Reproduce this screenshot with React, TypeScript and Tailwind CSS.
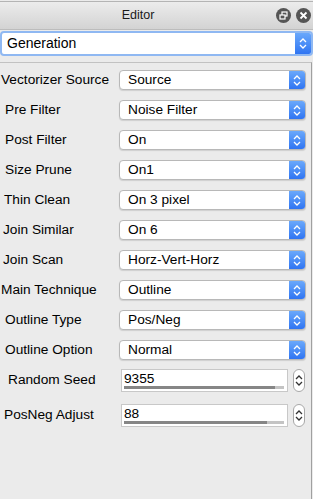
import React from 'react';

const font = { fontFamily: '"Liberation Sans", Arial, sans-serif' };

const rows = [
  { label: 'Vectorizer Source', value: 'Source', pad: 'pl-[1px]' },
  { label: 'Pre Filter', value: 'Noise Filter', pad: 'pl-[5px]' },
  { label: 'Post Filter', value: 'On', pad: 'pl-[5px]' },
  { label: 'Size Prune', value: 'On1', pad: 'pl-[5px]' },
  { label: 'Thin Clean', value: 'On 3 pixel', pad: 'pl-[4px]' },
  { label: 'Join Similar', value: 'On 6', pad: 'pl-[3px]' },
  { label: 'Join Scan', value: 'Horz-Vert-Horz', pad: 'pl-[3px]' },
  { label: 'Main Technique', value: 'Outline', pad: 'pl-[1px]' },
  { label: 'Outline Type', value: 'Pos/Neg', pad: 'pl-[5px]' },
  { label: 'Outline Option', value: 'Normal', pad: 'pl-[5px]' },
];

const Chevrons = ({ color = 'white' }: { color?: string }) => (
  <svg width="8" height="13" viewBox="0 0 8 13">
    <path d="M1 5 L4 2 L7 5" fill="none" stroke={color} strokeWidth="1.3" />
    <path d="M1 8 L4 11 L7 8" fill="none" stroke={color} strokeWidth="1.3" />
  </svg>
);

const Combo = ({ value }: { value: string }) => (
  <div className="flex h-[20px] flex-1 items-stretch rounded-[4px] border border-[#b8b8b8] bg-white shadow-[0_1px_1px_rgba(0,0,0,0.12)]">
    <div className="flex flex-1 items-center pl-[8px] text-[13.7px] text-black">{value}</div>
    <div className="flex w-[16px] items-center justify-center rounded-r-[3px] bg-gradient-to-b from-[#6aa8fb] to-[#2f74f2]">
      <Chevrons />
    </div>
  </div>
);

const Spin = ({ value, fill }: { value: string; fill: number }) => (
  <div className="flex items-center">
    <div className="flex h-[23px] w-[167px] flex-col border border-[#c8c8c8] bg-white pl-[2px] pr-[3px]">
      <div className="flex-1 pt-[2px] text-[13.7px] leading-[14px] text-black">{value}</div>
      <div className="mb-[2px] flex h-[4px] bg-[#c4c4c4]">
        <div className="h-full bg-[#868686]" style={{ width: `${fill}px` }} />
      </div>
    </div>
    <div className="ml-[5px] flex h-[23px] w-[12px] items-center justify-center rounded-[6px] border border-[#a8a8a8] bg-white">
      <Chevrons color="#333" />
    </div>
  </div>
);

export default function App() {
  return (
    <div className="h-[499px] w-[313px] overflow-hidden bg-[#ebebeb]" style={font}>
      <div className="mt-[1px] flex h-[29px] items-center border-t border-b border-t-[#b4b4b4] border-b-[#bcbcbc] bg-gradient-to-b from-[#ececec] to-[#d3d3d3]">
        <div className="flex-1 text-center text-[12.5px] text-[#1a1a1a]">Editor</div>
        <div className="flex gap-[5px] pr-[2px]">
          <div className="flex h-[15px] w-[15px] items-center justify-center rounded-full bg-[#555]">
            <svg width="9" height="9" viewBox="0 0 9 9">
              <rect x="3" y="1" width="5" height="4" fill="none" stroke="white" strokeWidth="1.2" />
              <rect x="1" y="4" width="5" height="4" fill="#555" stroke="white" strokeWidth="1.2" />
            </svg>
          </div>
          <div className="flex h-[15px] w-[15px] items-center justify-center rounded-full bg-[#555]">
            <svg width="9" height="9" viewBox="0 0 9 9">
              <path d="M1.5 1.5 L7.5 7.5 M7.5 1.5 L1.5 7.5" stroke="white" strokeWidth="1.8" />
            </svg>
          </div>
        </div>
      </div>
      <div className="mt-[1px] flex h-[25px] items-stretch rounded-[4px] border-2 border-[#8fb8f2] bg-white">
        <div className="flex flex-1 items-center pl-[5px] text-[14px] text-black">Generation</div>
        <div className="flex w-[16px] items-center justify-center rounded-r-[2px] bg-gradient-to-b from-[#6aa8fb] to-[#2f74f2]">
          <Chevrons />
        </div>
      </div>
      <div className="mt-[6px] mr-[1px] h-[440px] border-t border-r border-[#c2c2c2] border-r-[#a0a0a0]">
        <div className="h-[2px]" />
        {rows.map((r) => (
          <div key={r.label} className="flex h-[30px] items-center pr-[5px]">
            <div className={`w-[119px] text-[13.7px] text-black ${r.pad}`}>{r.label}</div>
            <Combo value={r.value} />
          </div>
        ))}
        <div className="mt-[3px] flex h-[24px] items-center">
          <div className="w-[121px] pl-[8px] text-[13.7px] text-black">Random Seed</div>
          <Spin value="9355" fill={151} />
        </div>
        <div className="mt-[12px] flex h-[23px] items-center">
          <div className="w-[121px] pl-[4px] text-[13.7px] text-black">PosNeg Adjust</div>
          <Spin value="88" fill={143} />
        </div>
      </div>
    </div>
  );
}
